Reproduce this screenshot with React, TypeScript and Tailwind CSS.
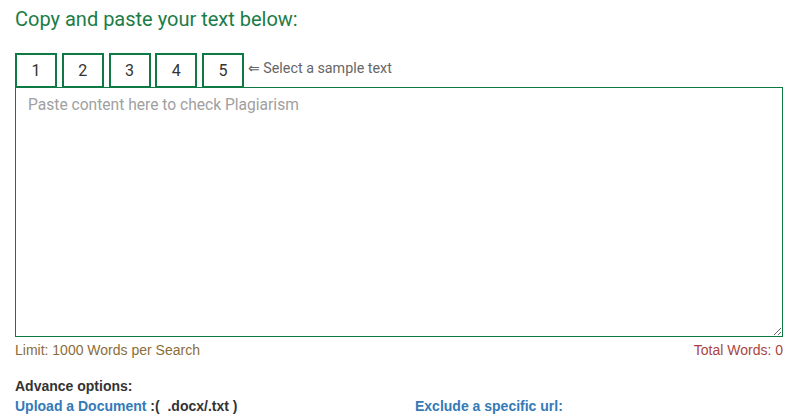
import React from 'react';

const samples = ['1', '2', '3', '4', '5'];

const App: React.FC = () => {
  return (
    <div className="w-[812px] h-[417px] bg-white overflow-hidden font-['Liberation_Sans',Arial,sans-serif]">
      <div className="w-[768px] ml-[15px]">
        {/* Heading */}
        <h2 className="pt-[7px] text-[20px] leading-[24px] text-[#1b7c47] font-['Roboto',sans-serif]">
          Copy and paste your text below:
        </h2>

        {/* Sample tabs */}
        <div className="mt-[22px] flex items-end">
          {samples.map((s) => (
            <button
              key={s}
              className="w-[42px] h-[35px] mr-[4.75px] border-2 border-[#0d7a43] text-[16px] text-[#333] bg-white flex items-center justify-center font-['Roboto',sans-serif]"
            >
              {s}
            </button>
          ))}
          <span className="mb-[9px] ml-[-1px] text-[14.3px] text-[#666] font-['Roboto',sans-serif]">
            ⇐ Select a sample text
          </span>
        </div>

        {/* Text area */}
        <textarea
          placeholder="Paste content here to check Plagiarism"
          className="block w-full h-[250px] -mt-px border border-[#0d7a43] px-[12px] py-[6px] text-[15.6px] font-['Roboto',sans-serif] outline-none placeholder:text-[#a0a0a0]"
        />

        <div className="flex justify-between mt-[5px] text-[14px] leading-[17px]">
          <span className="text-[#8a6d3b]">Limit: 1000 Words per Search</span>
          <span className="text-[#a94442]">Total Words: 0</span>
        </div>

        <div className="mt-[17px] text-[14px] font-bold text-[#333] leading-[20px]">Advance options:</div>
        <div className="grid grid-cols-[400px_1fr] text-[14px] font-bold leading-[20px] text-[#337ab7]">
          <div>
            Upload a Document&nbsp;<span className="text-[#333]">:(&nbsp;&nbsp;.docx/.txt )</span>
          </div>
          <div>Exclude a specific url:</div>
        </div>
      </div>
    </div>
  );
};

export default App;
